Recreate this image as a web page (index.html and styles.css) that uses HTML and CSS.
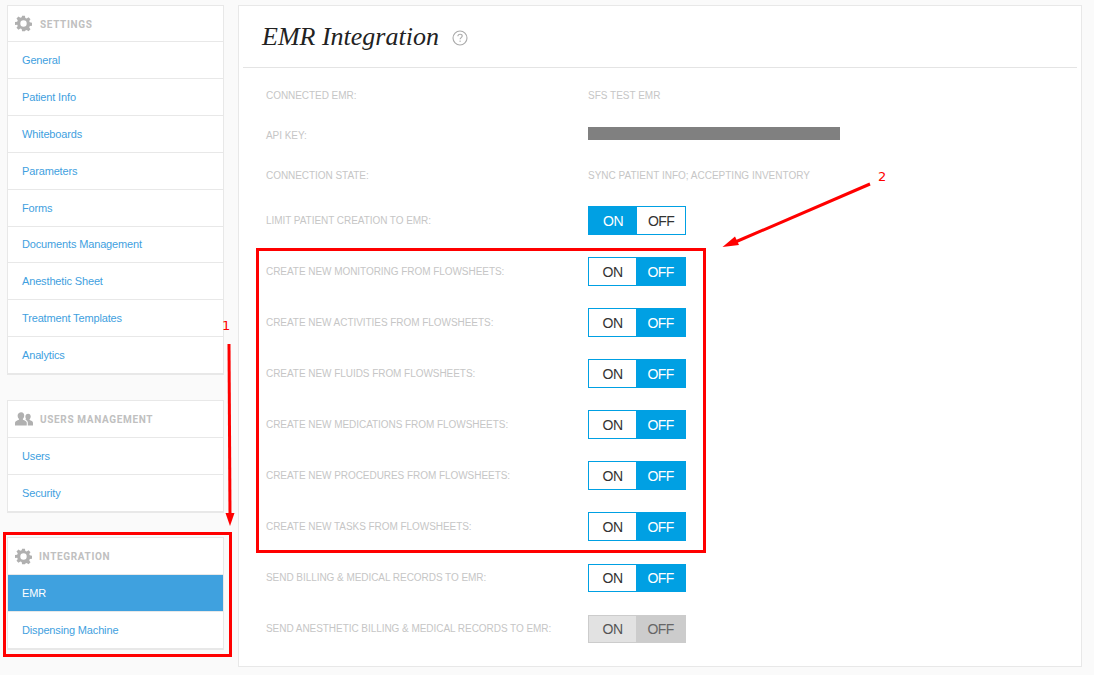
FILE: index.html
```html
<!DOCTYPE html>
<html lang="en">
<head>
<meta charset="utf-8">
<title>EMR Integration</title>
<link rel="stylesheet" href="styles.css">
</head>
<body>
<div class="page">
  <aside class="sidebar">
    <nav class="group">
      <div class="group-head">
        <svg class="ico" viewBox="0 0 24 24"><path fill-rule="evenodd" d="M10 1h4l.6 3.1 1.900.8 2.600-1.800 2.800 2.800-1.800 2.600.8 1.900 3.100.6v4l-3.100.6-.8 1.900 1.800 2.600-2.800 2.800-2.600-1.800-1.900.8L14 23h-4l-.6-3.100-1.900-.8-2.600 1.800-2.800-2.800 1.800-2.600-.8-1.900L0 14v-4l3.100-.6.800-1.900-1.800-2.600 2.800-2.800 2.600 1.800 1.900-.8zM12 7.500a4.500 4.500 0 1 0 0 9 4.500 4.500 0 0 0 0-9z"/></svg>
        <span>SETTINGS</span>
      </div>
      <a class="item">General</a>
      <a class="item">Patient Info</a>
      <a class="item">Whiteboards</a>
      <a class="item">Parameters</a>
      <a class="item">Forms</a>
      <a class="item">Documents Management</a>
      <a class="item">Anesthetic Sheet</a>
      <a class="item">Treatment Templates</a>
      <a class="item">Analytics</a>
    </nav>
    <nav class="group group-second">
      <div class="group-head">
        <svg class="ico ico-users" viewBox="0 0 26 20"><path d="M9 1c2.800 0 4.300 2.200 4.300 4.800 0 2-.8 3.700-1.900 4.700v1.400c2.700 1 5.600 2.200 5.600 4.300V20H0v-3.800c0-2.100 3-3.300 5.700-4.300v-1.400C4.500 9.500 3.800 7.800 3.800 5.800 3.800 3.200 6.200 1 9 1z"/><path d="M19 3c2.300 0 3.700 1.900 3.700 4.100 0 1.700-.7 3.100-1.600 3.900v1.300c2.300.8 4.900 1.800 4.900 3.700V20h-7.500v-3.800c0-1.900-1.400-3.300-3.500-4.400l1-.9c-.7-1-1-2.400-1-3.800C14.900 4.900 16.700 3 19 3z"/></svg>
        <span>USERS MANAGEMENT</span>
      </div>
      <a class="item">Users</a>
      <a class="item">Security</a>
    </nav>
    <nav class="group group-third">
      <div class="group-head">
        <svg class="ico" viewBox="0 0 24 24"><path fill-rule="evenodd" d="M10 1h4l.6 3.100 1.900.8 2.600-1.800 2.800 2.800-1.800 2.600.8 1.900 3.100.6v4l-3.100.6-.8 1.900 1.800 2.600-2.800 2.800-2.600-1.800-1.900.8L14 23h-4l-.6-3.100-1.900-.8-2.600 1.800-2.800-2.800 1.800-2.600-.8-1.900L0 14v-4l3.100-.6.800-1.900-1.800-2.600 2.800-2.800 2.600 1.800 1.900-.8zM12 7.500a4.500 4.500 0 1 0 0 9 4.500 4.500 0 0 0 0-9z"/></svg>
        <span>INTEGRATION</span>
      </div>
      <a class="item active">EMR</a>
      <a class="item">Dispensing Machine</a>
    </nav>
  </aside>
  <main class="panel">
    <header class="panel-head">
      <h1>EMR Integration</h1>
      <svg class="help" viewBox="0 0 16 16"><circle cx="8" cy="8" r="7" fill="none" stroke="#aaa" stroke-width="1.100"/><path d="M5.900 6.300c0-1.300 1-2 2.200-2s2.100.7 2.100 1.800c0 1.500-2.100 1.600-2.100 3.200" fill="none" stroke="#aaa" stroke-width="1.100"/><rect x="7.500" y="10.600" width="1.200" height="1.200" fill="#aaa"/></svg>
    </header>
    <div class="rows">
      <div class="row text"><span class="label">CONNECTED EMR:</span><span class="label">SFS TEST EMR</span></div>
      <div class="row text"><span class="label">API KEY:</span><span class="redacted"></span></div>
      <div class="row text"><span class="label">CONNECTION STATE:</span><span class="label">SYNC PATIENT INFO; ACCEPTING INVENTORY</span></div>
      <div class="row"><span class="label">LIMIT PATIENT CREATION TO EMR:</span><div class="toggle"><span class="on sel">ON</span><span>OFF</span></div></div>
      <div class="row"><span class="label">CREATE NEW MONITORING FROM FLOWSHEETS:</span><div class="toggle"><span class="on">ON</span><span class="sel">OFF</span></div></div>
      <div class="row"><span class="label">CREATE NEW ACTIVITIES FROM FLOWSHEETS:</span><div class="toggle"><span class="on">ON</span><span class="sel">OFF</span></div></div>
      <div class="row"><span class="label">CREATE NEW FLUIDS FROM FLOWSHEETS:</span><div class="toggle"><span class="on">ON</span><span class="sel">OFF</span></div></div>
      <div class="row"><span class="label">CREATE NEW MEDICATIONS FROM FLOWSHEETS:</span><div class="toggle"><span class="on">ON</span><span class="sel">OFF</span></div></div>
      <div class="row"><span class="label">CREATE NEW PROCEDURES FROM FLOWSHEETS:</span><div class="toggle"><span class="on">ON</span><span class="sel">OFF</span></div></div>
      <div class="row"><span class="label">CREATE NEW TASKS FROM FLOWSHEETS:</span><div class="toggle"><span class="on">ON</span><span class="sel">OFF</span></div></div>
      <div class="row"><span class="label">SEND BILLING &amp; MEDICAL RECORDS TO EMR:</span><div class="toggle short"><span class="on">ON</span><span class="sel">OFF</span></div></div>
      <div class="row"><span class="label">SEND ANESTHETIC BILLING &amp; MEDICAL RECORDS TO EMR:</span><div class="toggle short disabled"><span class="on">ON</span><span class="sel">OFF</span></div></div>
    </div>
  </main>
</div>
<div class="mark box-one"></div>
<div class="mark box-two"></div>
<span class="mark num num-one">1</span>
<span class="mark num num-two">2</span>
<svg class="mark arrows" viewBox="0 0 1094 675" width="1094" height="675">
  <path d="M229 344 L230 516" stroke="#f00" stroke-width="3" fill="none"/>
  <path d="M225.500 513 L234.500 513 L230 526 Z" fill="#f00"/>
  <path d="M870 184 L733 243" stroke="#f00" stroke-width="3" fill="none"/>
  <path d="M722.500 247 L735 236.500 L739 245 Z" fill="#f00"/>
</svg>
</body>
</html>
```
FILE: styles.css
```css
* { box-sizing: border-box; }
html, body { margin: 0; height: 100%; }
body {
  background: #fafafa;
  font-family: "Liberation Sans", Arial, sans-serif;
  overflow: hidden;
  position: relative;
}
.page {
  display: flex;
  align-items: flex-start;
  gap: 14px;
  padding: 5px 12px 0 7px;
}
.sidebar {
  width: 217px;
  flex: none;
  display: flex;
  flex-direction: column;
}
.group {
  background: #fff;
  border: 1px solid #e8e8e8;
  border-bottom-width: 2px;
  display: flex;
  flex-direction: column;
}
.group-second { margin-top: 25.3px; }
.group-third { margin-top: 24.75px; }
.group-second .item:first-of-type { height: 37px; }
.group-head {
  height: 36.3px;
  display: flex;
  align-items: center;
  padding-left: 7px;
  gap: 8px;
  border-bottom: 1px solid #e8e8e8;
  font-family: Roboto, "Liberation Sans", sans-serif;
  font-size: 10px;
  font-weight: 700;
  letter-spacing: .65px;
  color: #c0c0c0;
}
.group-head span { margin-top: 1px; }
.ico { width: 17px; height: 17px; fill: #b0b0b0; flex: none; }
.ico-users { width: 18px; height: 15px; margin-right: -1px; }
.group-third .ico { margin-right: -1px; }
.item {
  height: 36.85px;
  display: flex;
  align-items: center;
  padding-left: 14px;
  border-bottom: 1px solid #e8e8e8;
  font-size: 11px;
  letter-spacing: -.15px;
  color: #3f9fe0;
}
.item:last-child { border-bottom: 0; height: 36px; }
.item.active { background: #3fa1df; color: #fff; }
.panel {
  flex: 1;
  height: 662px;
  background: #fff;
  border: 1px solid #e8e8e8;
  padding: 0 4px;
}
.panel-head {
  height: 62px;
  display: flex;
  align-items: center;
  gap: 13px;
  padding: 0 0 0 19px;
  border-bottom: 1px solid #e4e4e4;
}
h1 {
  margin: 0;
  font-family: "Liberation Serif", serif;
  font-style: italic;
  font-weight: 400;
  font-size: 26px;
  color: #222;
}
.help { width: 16px; height: 16px; flex: none; margin-top: 3px; }
.rows { padding: 7px 0 0 23px; }
.row { height: 51px; display: flex; align-items: center; }
.row.text { height: 40px; }
.label {
  font-size: 10px;
  color: #c6c6c6;
}
.row > .label:first-child { width: 322px; flex: none; letter-spacing: -.05px; }
.redacted { width: 252px; height: 13px; margin-bottom: 3px; background: #808080; }
.toggle {
  width: 98px;
  height: 29px;
  display: flex;
  border: 1px solid #00a0e3;
  font-size: 14px;
  letter-spacing: -.6px;
  color: #333;
}
.toggle.short { height: 28px; }
.toggle span {
  flex: 1;
  display: flex;
  align-items: center;
  justify-content: center;
}
.toggle .on { flex: none; width: 47px; }
.toggle .on.sel { width: 48px; }
.toggle .sel { background: #00a0e3; color: #fff; }
.toggle.disabled { border-color: #ccc; color: #555; background: #e2e2e2; }
.toggle.disabled .sel { background: #ccc; color: #666; }
.mark { position: absolute; }
.box-one { left: 256px; top: 248px; width: 450px; height: 305px; border: 3px solid #f00; }
.box-two { left: 3px; top: 532px; width: 229px; height: 125px; border: 3px solid #f00; }
.num { font-family: "DejaVu Sans", sans-serif; font-size: 13px; color: #f00; line-height: 16px; }
.num-one { left: 222px; top: 318px; }
.num-two { left: 878px; top: 169px; }
.arrows { left: 0; top: 0; pointer-events: none; }
```
